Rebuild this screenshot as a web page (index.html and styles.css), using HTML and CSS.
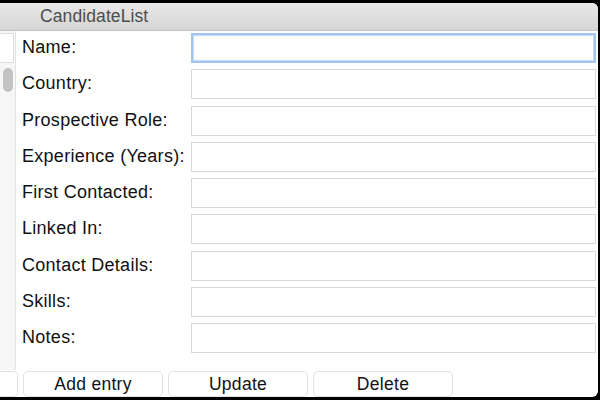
FILE: index.html
```html
<!DOCTYPE html>
<html>
<head>
<meta charset="utf-8">
<link rel="stylesheet" href="styles.css">
</head>
<body>
<div class="screen">
  <div class="window">
    <div class="titlebar"><span class="title">CandidateList</span></div>
    <div class="content">
      <div class="sidebar">
        <div class="listbox"></div>
        <div class="thumb"></div>
      </div>
      <div class="form">
        <label class="lbl">Name:</label><input class="field focused" type="text">
        <label class="lbl">Country:</label><input class="field" type="text">
        <label class="lbl">Prospective Role:</label><input class="field" type="text">
        <label class="lbl">Experience (Years):</label><input class="field" type="text">
        <label class="lbl">First Contacted:</label><input class="field" type="text">
        <label class="lbl">Linked In:</label><input class="field" type="text">
        <label class="lbl">Contact Details:</label><input class="field" type="text">
        <label class="lbl">Skills:</label><input class="field" type="text">
        <label class="lbl">Notes:</label><input class="field" type="text">
      </div>
    </div>
    <div class="buttons">
      <button class="btn partial"></button>
      <button class="btn">Add entry</button>
      <button class="btn">Update</button>
      <button class="btn">Delete</button>
    </div>
  </div>
</div>
</body>
</html>
```
FILE: styles.css
```css
* { box-sizing: border-box; }
html, body { margin: 0; padding: 0; }
body { background: #000; font-family: "Liberation Sans", Arial, sans-serif; }
.screen { width: 600px; height: 400px; background: #000; padding-top: 3px; overflow: hidden; }
.window {
  width: 598px; height: 394px; background: #fff;
  border-radius: 0 6px 6px 0; overflow: hidden;
  display: flex; flex-direction: column;
}
.titlebar {
  height: 28px; flex: none;
  background: linear-gradient(#e8e8e8, #d6d6d6);
  border-bottom: 1px solid #c2c2c2;
  display: flex; align-items: center; padding-left: 40px;
}
.title { font-size: 17.5px; color: #4d4d4d; letter-spacing: 0.1px; }
.content { display: flex; height: 339px; flex: none; }
.sidebar {
  width: 16px; flex: none; background: #f6f6f6;
  border-right: 1px solid #e4e4e4;
  display: flex; flex-direction: column; padding-top: 2px;
}
.listbox { width: 14px; height: 30px; background: #fff; border: 1px solid #dcdcdc; border-left: none; }
.thumb { width: 10px; height: 24px; margin: 5px 0 0 3px; background: #c3c3c3; border-radius: 5px; }
.form {
  flex: 1; display: grid; grid-template-columns: 169px 1fr;
  grid-auto-rows: 30px; row-gap: 6.3px; align-items: center;
  padding: 2px 2px 0 6px;
}
.lbl { font-size: 18px; color: #111; white-space: nowrap; letter-spacing: 0.28px; margin-top: -1px; }
.field {
  height: 30px; width: 100%; margin: 0; border: 1px solid #d9d9d9;
  background: #fff; outline: none; font: inherit;
}
.field.focused { border: 2px solid #a3c4ee; box-shadow: 0 0 0 1px #c9dcf5 inset; }
.buttons { display: flex; gap: 5px; padding-top: 1px; height: 27px; flex: none; }
.btn {
  width: 140px; height: 26px; background: #fff; border: 1px solid #e2e2e2;
  border-radius: 5px; font-family: "Liberation Sans", Arial, sans-serif;
  font-size: 17.5px; color: #111; padding: 0; margin: 0; letter-spacing: 0.3px;
}
.btn.partial { width: 18px; border-left: none; border-radius: 0 5px 5px 0; }
```
